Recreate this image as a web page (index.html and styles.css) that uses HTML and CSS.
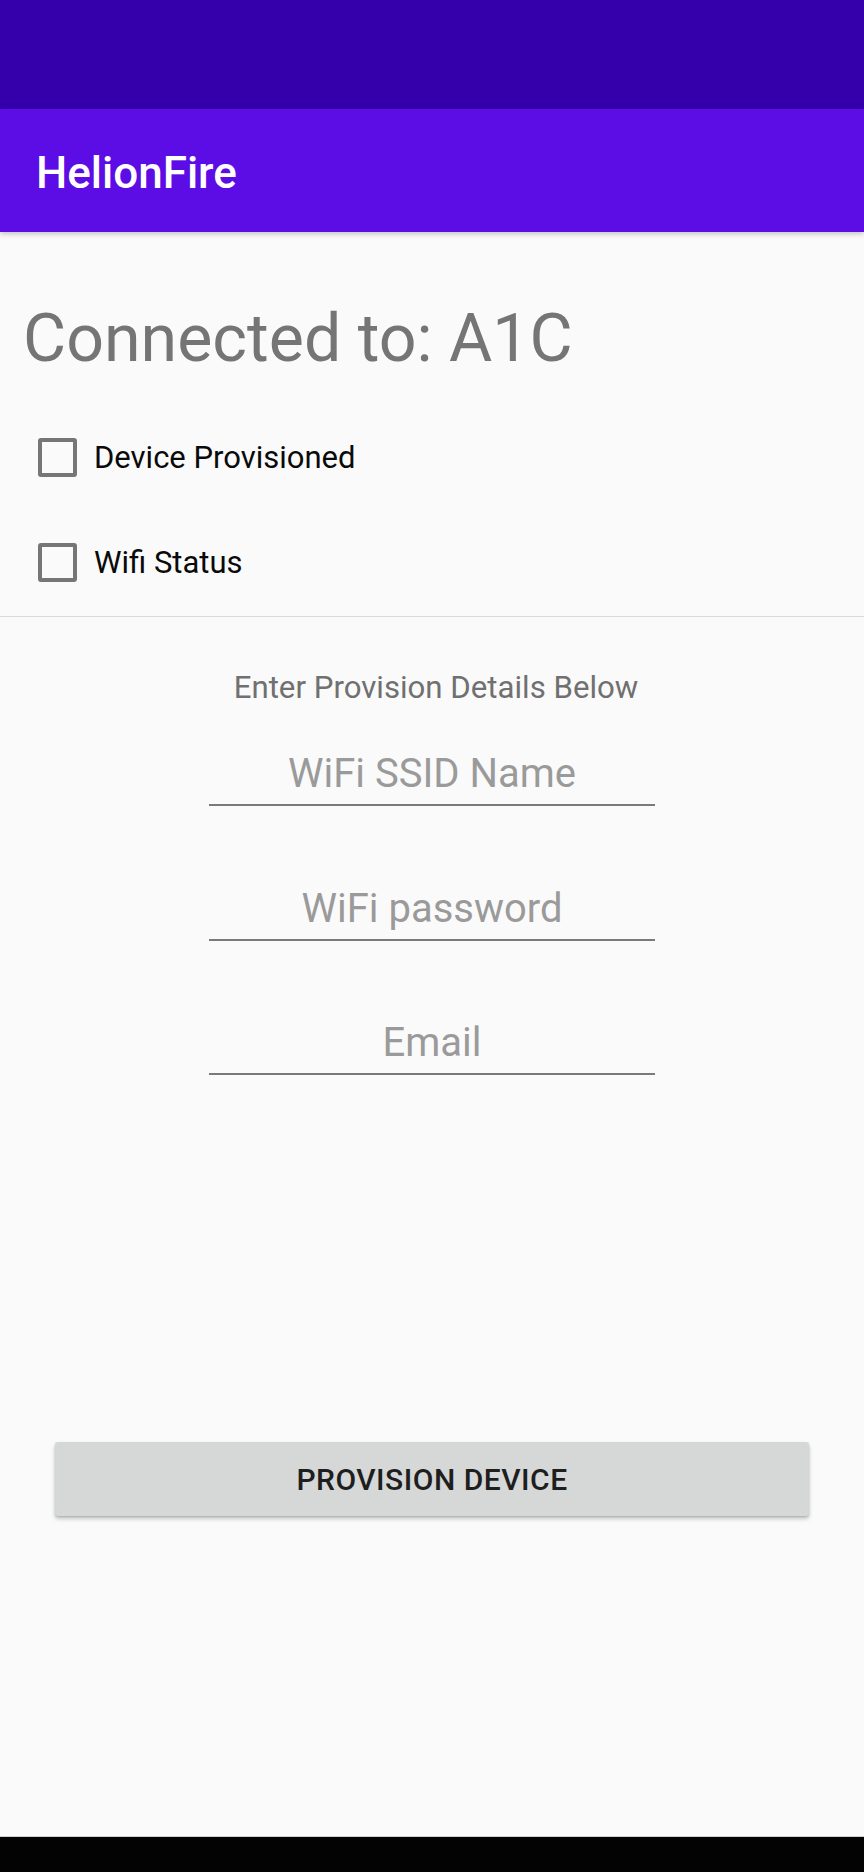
FILE: index.html
```html
<!DOCTYPE html>
<html lang="en">
<head>
<meta charset="utf-8">
<title>HelionFire</title>
<link rel="stylesheet" href="styles.css">
</head>
<body>
<div class="screen">
  <div class="status-bar"></div>
  <header class="app-bar"><h1 class="app-title">HelionFire</h1></header>
  <main class="content">
    <h2 class="connected">Connected to: A1C</h2>
    <div class="check-row"><span class="checkbox"></span><span class="check-label">Device Provisioned</span></div>
    <div class="check-row"><span class="checkbox"></span><span class="check-label">Wifi Status</span></div>
    <hr class="divider">
    <p class="instructions">Enter Provision Details Below</p>
    <div class="fields">
      <div class="field">WiFi SSID Name</div>
      <div class="field">WiFi password</div>
      <div class="field">Email</div>
    </div>
    <div class="button-wrap"><button class="provision-btn">PROVISION DEVICE</button></div>
  </main>
  <div class="nav-bar"></div>
</div>
</body>
</html>
```
FILE: styles.css
```css
* { box-sizing: border-box; }
html, body { margin: 0; padding: 0; }
body {
  background: #fafafa;
  font-family: Roboto, "Liberation Sans", sans-serif;
}
.screen {
  display: flex;
  flex-direction: column;
  min-height: 1872px;
}
.status-bar {
  height: 109px;
  background: #3500ac;
}
.app-bar {
  height: 123px;
  background: #5c0ce4;
  display: flex;
  align-items: center;
  padding: 4px 0 0 36px;
  box-shadow: 0 2px 5px rgba(0,0,0,0.22);
  position: relative;
  z-index: 1;
}
.app-title {
  margin: 0;
  color: #ffffff;
  font-size: 44px;
  font-weight: 500;
  line-height: 52px;
}
.content {
  flex: 1;
  display: flex;
  flex-direction: column;
  padding-top: 66px;
}
.connected {
  margin: 0 0 27px 0;
  padding-left: 23px;
  font-size: 66.3px;
  font-weight: 400;
  line-height: 80px;
  color: #757575;
}
.check-row {
  height: 105px;
  display: flex;
  align-items: center;
  padding-left: 38px;
}
.checkbox {
  width: 39px;
  height: 39px;
  border: 4px solid #767676;
  border-radius: 3px;
  flex: none;
}
.check-label {
  margin-left: 17px;
  font-size: 31px;
  color: #0a0a0a;
  line-height: 36px;
}
.divider {
  margin: 1px 0 0 0;
  border: 0;
  height: 1px;
  background: #dadada;
}
.instructions {
  margin: 53px 0 0 0;
  padding-left: 8px;
  text-align: center;
  font-size: 31.2px;
  line-height: 36px;
  color: #707070;
}
.fields {
  display: flex;
  flex-direction: column;
  align-items: center;
  gap: 78.5px;
  margin-top: 44px;
}
.field {
  width: 446px;
  text-align: center;
  font-size: 40px;
  line-height: 48px;
  padding-bottom: 6px;
  color: #9a9a9a;
  border-bottom: 2px solid #7a7a7a;
}
.button-wrap {
  display: flex;
  justify-content: center;
  margin-top: 367px;
}
.provision-btn {
  width: 754px;
  height: 74px;
  border: 0;
  border-radius: 3px;
  background: #d6d7d7;
  color: #1e1e1e;
  font-family: Roboto, "Liberation Sans", sans-serif;
  font-size: 30px;
  font-weight: 500;
  letter-spacing: 0.5px;
  box-shadow: 0 3px 4px rgba(0,0,0,0.2), 0 1px 2px rgba(0,0,0,0.15);
}
.nav-bar {
  height: 36px;
  background: #030303;
  border-top: 1px solid #d0d0d0;
}
```
